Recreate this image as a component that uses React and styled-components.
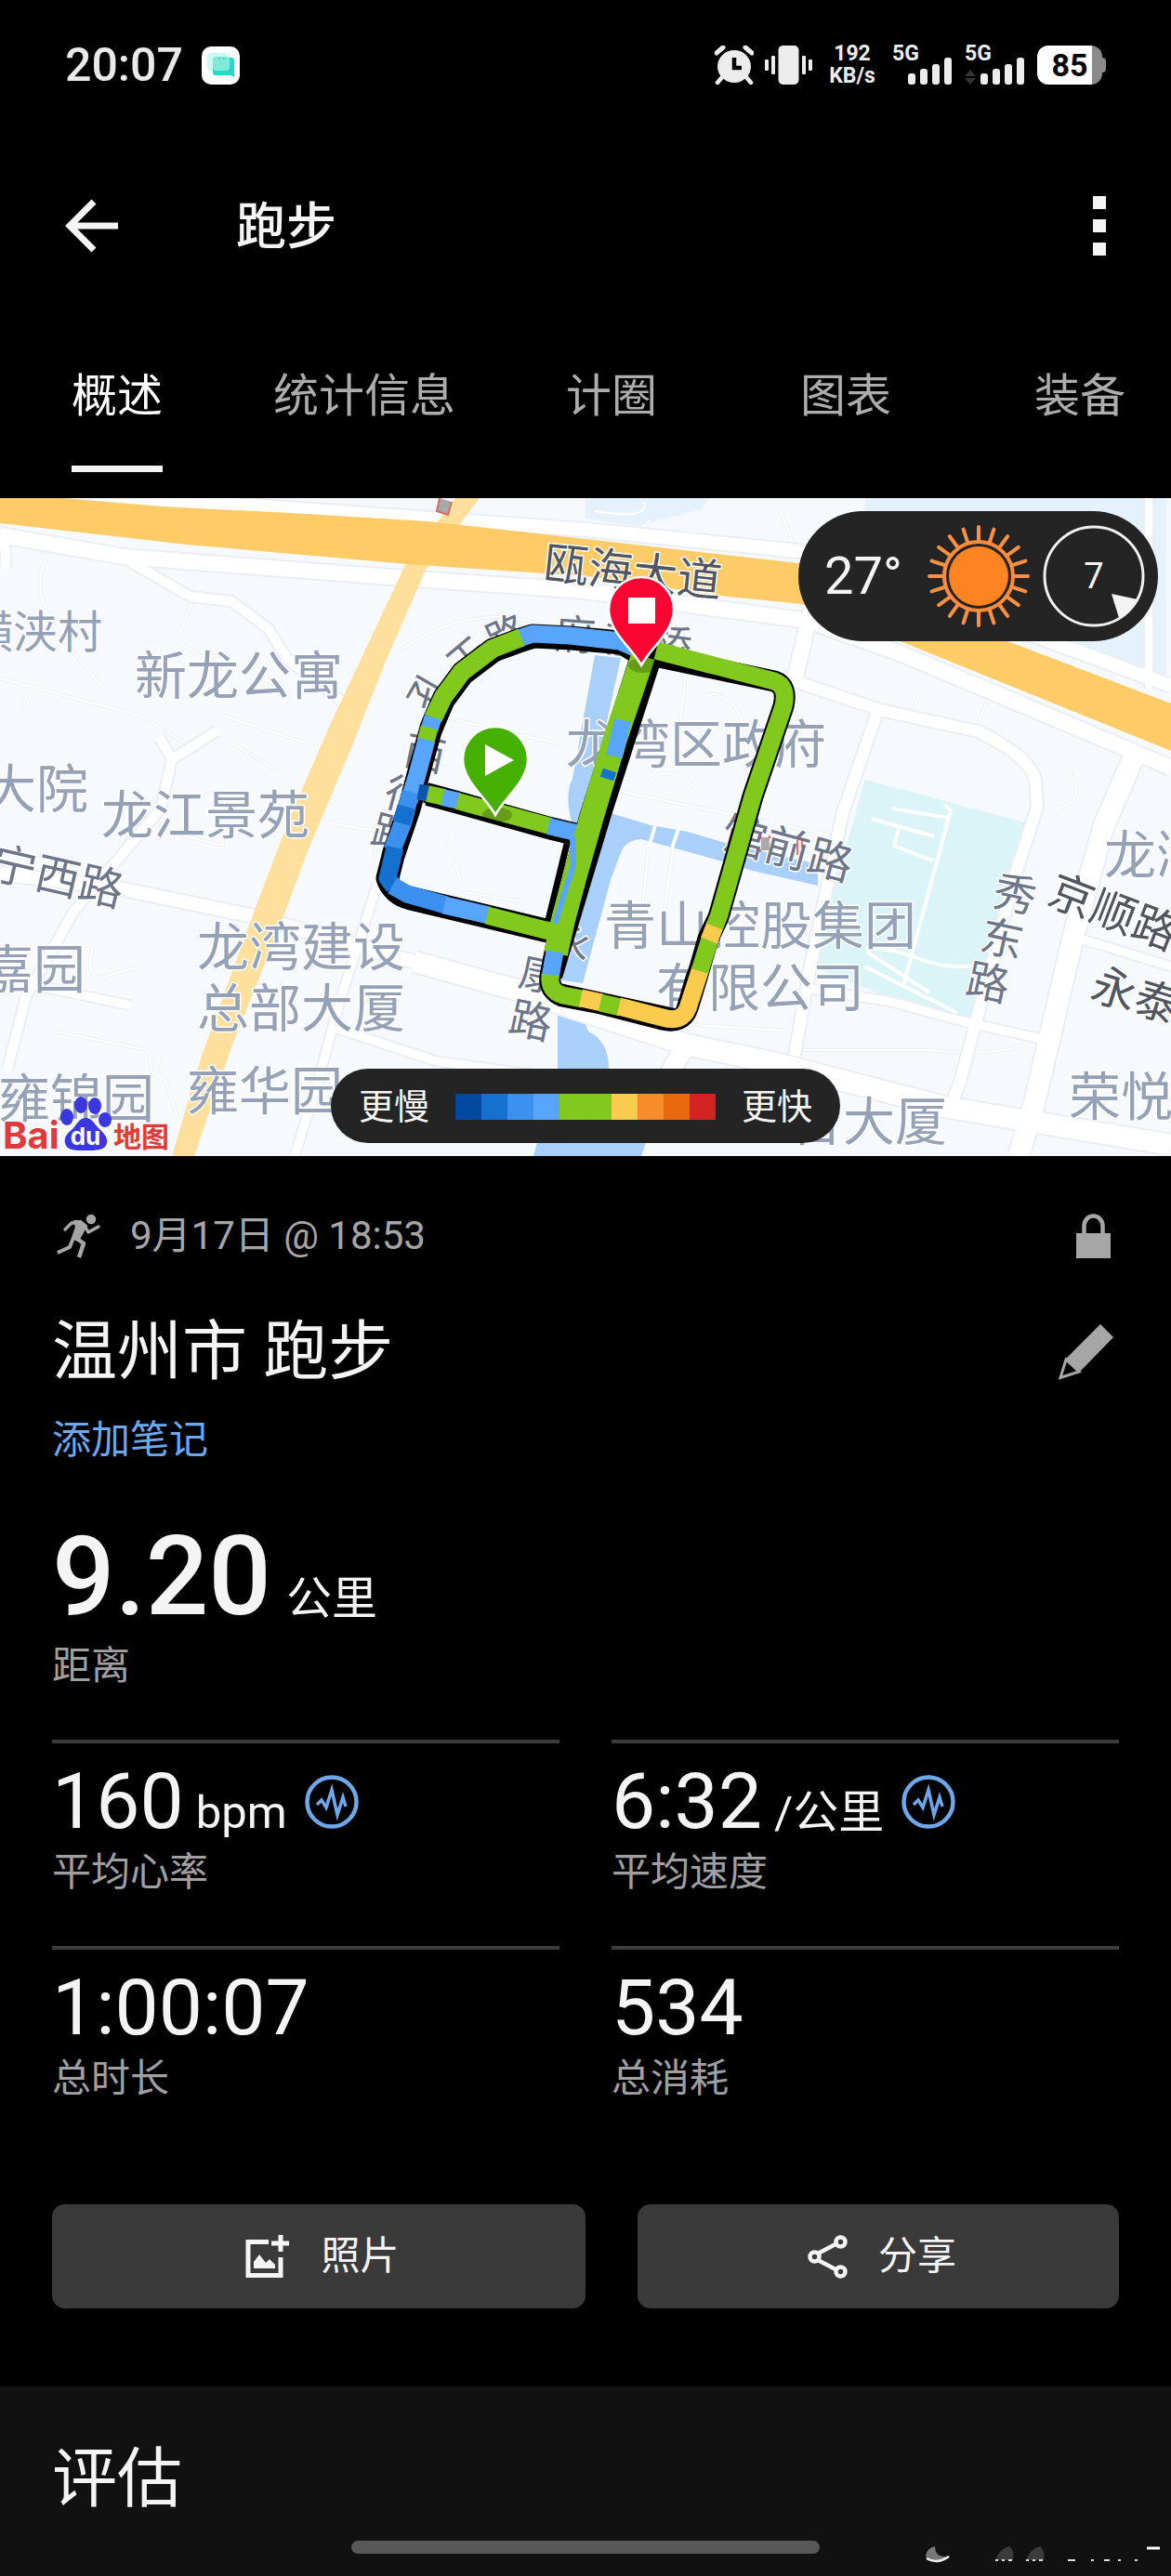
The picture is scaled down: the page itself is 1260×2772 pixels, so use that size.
import React, { useState } from "react";
import styled, { createGlobalStyle } from "styled-components";

const GlobalStyle = createGlobalStyle`
  * { box-sizing: border-box; }
  body {
    margin: 0;
    background: #000;
    color: #f4f4f4;
    font-family: Roboto, "Noto Sans CJK SC", sans-serif;
  }
  button { font: inherit; color: inherit; border: 0; background: none; padding: 0; cursor: pointer; }
  h1, h2, h3, p, dl, dd, dt { margin: 0; font-weight: 400; }
  svg { display: block; flex: none; }
`;

const Screen = styled.div`
  display: flex;
  flex-direction: column;
  min-height: 100vh;
  background: #000;
`;

/* ---------- status bar ---------- */

const StatusBar = styled.header`
  display: flex;
  align-items: center;
  justify-content: space-between;
  height: 140px;
  padding: 0 70px;
`;

const StatusGroup = styled.div`
  display: flex;
  align-items: center;
  gap: ${(p) => p.$gap}px;
`;

const Clock = styled.span`
  font-size: 50px;
  line-height: 52px;
  font-weight: 500;
  color: #e9e9e9;
`;

const NetSpeed = styled.span`
  width: 62px;
  font-size: 23px;
  line-height: 24px;
  font-weight: 700;
  text-align: center;
  color: #ececec;
`;

const SignalBox = styled.span`
  position: relative;
  width: 66px;
  height: 42px;
`;

const SignalLabel = styled.span`
  position: absolute;
  left: 0;
  top: -3px;
  font-size: 23px;
  line-height: 24px;
  font-weight: 700;
  color: #ececec;
`;

const Battery = styled.span`
  display: flex;
  align-items: center;
  width: 74px;
  &::after {
    content: "";
    width: 4px;
    height: 16px;
    border-radius: 0 4px 4px 0;
    background: #8a8a8a;
  }
`;

const BatteryBody = styled.span`
  flex: 1;
  height: 42px;
  border-radius: 12px;
  background: linear-gradient(90deg, #fff 84%, #8a8a8a 84%);
  color: #000;
  font-size: 34px;
  line-height: 43px;
  font-weight: 700;
  text-align: center;
`;

/* ---------- app bar and tabs ---------- */

const AppBar = styled.div`
  display: flex;
  align-items: center;
  height: 206px;
  padding: 0 70px;
`;

const IconButton = styled.button`
  display: flex;
  align-items: center;
`;

const AppTitle = styled.h1`
  flex: 1;
  padding: 4px 0 0 127px;
  font-size: 54px;
  line-height: 64px;
  font-weight: 500;
`;

const Dots = styled.span`
  display: grid;
  gap: 11px;
  i { width: 14px; height: 14px; background: #f4f4f4; }
`;

const Tabs = styled.nav`
  display: flex;
  overflow: hidden;
  padding-bottom: 28px;
`;

const Tab = styled.button`
  flex: none;
  min-width: 252px;
  height: 162px;
  padding: 0 42px;
  display: flex;
  justify-content: center;
  font-size: 49px;
  line-height: 162px;
  color: ${(p) => (p.$active ? "#fff" : "#adadad")};
  span { box-shadow: ${(p) => (p.$active ? "inset 0 -7px #f4f4f4" : "none")}; }
`;

/* ---------- map ---------- */

const MapArea = styled.section`
  position: relative;
  background: #f7f9fe;
`;

const MapCanvas = styled.svg`
  width: 100%;
  height: auto;
`;

const WeatherPill = styled.div`
  position: absolute;
  top: 14px;
  right: 14px;
  display: flex;
  align-items: center;
  gap: 14px;
  height: 140px;
  padding: 0 14px 0 28px;
  border-radius: 70px;
  background: #242424;
`;

const Temperature = styled.span`
  width: 97px;
  font-size: 56px;
  line-height: 64px;
`;

const Wind = styled.span`
  position: relative;
  display: flex;
  align-items: center;
  justify-content: center;
  width: 110px;
  height: 110px;
  font-size: 38px;
  svg { position: absolute; inset: 0; }
`;

const LegendPill = styled.div`
  position: absolute;
  bottom: 14px;
  left: 50%;
  transform: translateX(-50%);
  display: flex;
  align-items: center;
  gap: 28px;
  height: 80px;
  padding: 2px 30px 0;
  border-radius: 40px;
  background: #242424;
  font-size: 38px;
  line-height: 48px;
  white-space: nowrap;
`;

const Scale = styled.span`
  display: flex;
`;

const Swatch = styled.i`
  width: 28px;
  height: 28px;
  background: ${(p) => p.$color};
`;

/* ---------- summary ---------- */

const Summary = styled.main`
  padding: 62px 56px 84px;
`;

const MetaRow = styled.div`
  display: flex;
  align-items: center;
  height: 48px;
  font-size: 42px;
  line-height: 48px;
  color: #a6a6a6;
  padding-right: 9px;
`;

const DateText = styled.span`
  flex: 1;
  padding-left: 31px;
`;

const TitleRow = styled.div`
  display: flex;
  align-items: center;
  justify-content: space-between;
  margin-top: 59px;
  padding-right: 6px;
`;

const ActivityName = styled.h2`
  font-size: 70px;
  line-height: 84px;
`;

const NoteLink = styled.a`
  display: block;
  width: max-content;
  margin-top: 27px;
  font-size: 42px;
  line-height: 52px;
  color: #6ea8f0;
  text-decoration: none;
`;

const Distance = styled.dl`
  display: flex;
  flex-direction: column-reverse;
  gap: 10px;
  margin-top: 61px;
`;

const DistanceValue = styled.dd`
  display: flex;
  align-items: baseline;
  gap: 16px;
  height: 120px;
  font-size: 119px;
  line-height: 120px;
  font-weight: 500;
`;

const Unit = styled.span`
  font-size: 49px;
  line-height: 56px;
  font-weight: 400;
`;

const StatLabel = styled.dt`
  font-size: 42px;
  line-height: 52px;
  color: #a0a0a0;
`;

const StatGrid = styled.dl`
  display: grid;
  grid-template-columns: 1fr 1fr;
  gap: 53px 56px;
  margin-top: 53px;
`;

const Stat = styled.div`
  display: flex;
  flex-direction: column-reverse;
  justify-content: flex-end;
  gap: 8px;
  padding-top: 21px;
  border-top: 4px solid #3c3c3c;
`;

const StatValue = styled.dd`
  display: flex;
  align-items: center;
  gap: 19px;
  height: 84px;
`;

const Figure = styled.span`
  display: flex;
  align-items: baseline;
  gap: 13px;
  height: 84px;
  font-size: 84px;
  line-height: 84px;
`;

const Actions = styled.div`
  display: grid;
  grid-template-columns: 41fr 37fr;
  gap: 56px;
  margin-top: 109px;
`;

const ActionButton = styled.button`
  display: flex;
  align-items: center;
  justify-content: center;
  gap: 33px;
  height: 112px;
  padding-left: 8px;
  border-radius: 14px;
  background: #3a3a3a;
  font-size: 42px;
  line-height: 52px;
`;

const Evaluation = styled.section`
  position: relative;
  flex: 1;
  min-height: 204px;
  padding: 58px 56px 62px;
  background: #111;
`;

const HomeIndicator = styled.div`
  position: absolute;
  left: 30%;
  right: 30%;
  bottom: 24px;
  height: 14px;
  border-radius: 7px;
  background: #585858;
`;

const Corner = styled.div`
  position: absolute;
  right: 0;
  bottom: 0;
`;

/* ---------- icons ---------- */

const AlarmIcon = () => (
  <svg width="42" height="42" viewBox="0 0 42 42" fill="#ececec" stroke="#ececec" aria-hidden="true">
    <ellipse cx="21" cy="22.5" rx="18" ry="17.5" stroke="none" />
    <path d="M2 8 9 2M40 8 33 2" strokeWidth="5" strokeLinecap="round" />
    <path d="M8 34 3 40M34 34 39 40" strokeWidth="4.5" strokeLinecap="round" />
    <path d="M21 13v11h8" fill="none" stroke="#000" strokeWidth="4.5" />
  </svg>
);

const VibrateIcon = () => (
  <svg width="51" height="42" viewBox="0 0 51 42" fill="#ececec" aria-hidden="true">
    <rect x="14.500" y="0" width="22" height="42" rx="5" />
    <rect x="7" y="11" width="4" height="20" rx="1" />
    <rect x="0" y="15" width="4" height="12" rx="1" />
    <rect x="40" y="11" width="4" height="20" rx="1" />
    <rect x="47" y="15" width="4" height="12" rx="1" />
  </svg>
);

const ChatAppIcon = () => (
  <svg width="41" height="41" viewBox="0 0 41 41" aria-hidden="true">
    <rect width="41" height="41" rx="10" fill="#fff" />
    <rect x="6" y="7" width="24" height="20" rx="5" fill="#c9faf1" />
    <path d="M14 12h18q3 0 3 3v18l-4-2H15q-3 0-3-3V14q0-2 2-2z" fill="#22dcc8" />
    <rect x="12" y="11" width="18" height="15" rx="4" fill="#7fead8" />
    <path d="M19 12v2M24 12v2" stroke="#3aa" strokeWidth="1" />
  </svg>
);

function Signal({ arrows }) {
  return (
    <SignalBox>
      <SignalLabel>5G</SignalLabel>
      <svg width="66" height="42" viewBox="0 0 66 42" aria-hidden="true">
        {arrows && <path d="M0 33 6 26l6 7zM0 35l6 7 6-7z" fill="#333" />}
        {[12, 17, 22, 29].map((h, i) => (
          <rect key={h} x={17 + i * 13} y={42 - h} width="8" height={h} rx="3" fill="#ececec" />
        ))}
      </svg>
    </SignalBox>
  );
}

const BackIcon = () => (
  <svg width="57" height="58" viewBox="0 0 57 58" fill="none" stroke="#f4f4f4" strokeWidth="7" aria-hidden="true">
    <path d="M31 3 5 29l26 26M5 29h52" />
  </svg>
);

const RunIcon = () => (
  <svg width="53" height="48" viewBox="0 0 53 48" fill="none" stroke="#a6a6a6" strokeLinejoin="round" aria-hidden="true">
    <circle cx="42" cy="6" r="5.200" fill="#a6a6a6" stroke="none" />
    <path d="M24 8h7l6 5-5 9-4 7-6-3 4-12z" fill="#a6a6a6" strokeWidth="2" />
    <path d="M29 10l-8 0-7 7M35 13l4 7 11-6" strokeWidth="3.400" strokeLinecap="round" />
    <path d="M24 25l10 7-5 15" strokeWidth="4.500" />
    <path d="M23 26l-4 10-13 6" strokeWidth="4" />
  </svg>
);

const LockIcon = () => (
  <svg width="37" height="48" viewBox="0 0 37 48" aria-hidden="true">
    <path d="M8.500 23V13a10 10.500 0 0 1 20 0v10" fill="none" stroke="#a6a6a6" strokeWidth="4.500" />
    <rect y="21" width="37" height="27" fill="#a6a6a6" />
  </svg>
);

const PencilIcon = () => (
  <svg width="59" height="60" viewBox="0 0 59 60" aria-hidden="true">
    <path d="M45 0 59 14 22 52 7 38z" fill="#a6a6a6" />
    <path d="M8 38 2 57.500 22 51z" fill="#000" stroke="#a6a6a6" strokeWidth="3" />
  </svg>
);

const PulseIcon = () => (
  <svg width="58" height="58" viewBox="0 0 58 58" fill="none" stroke="#6ea8ea" aria-hidden="true">
    <circle cx="29" cy="29" r="26.500" strokeWidth="4.500" />
    <path d="M13 32l5-5 5 8 6-19 6 27 6-19 3 10" strokeWidth="3.500" />
  </svg>
);

const PhotoIcon = () => (
  <svg width="48" height="48" viewBox="0 0 48 48" aria-hidden="true">
    <path d="M25 8.500H3v36h35V25" fill="none" stroke="#f4f4f4" strokeWidth="5" />
    <path d="M38 1v18M28 10h19" stroke="#f4f4f4" strokeWidth="5" />
    <path d="M9 37V30l6-8 7 9 4-4 6 6v4z" fill="#f4f4f4" />
  </svg>
);

const ShareIcon = () => (
  <svg width="43" height="47" viewBox="0 0 43 47" fill="none" stroke="#f4f4f4" strokeWidth="4.500" aria-hidden="true">
    <path d="M11 20 30 10M11 27 30 37" />
    <circle cx="7.500" cy="23.500" r="5" />
    <circle cx="35.500" cy="7.500" r="5" />
    <circle cx="35.500" cy="39.500" r="5" />
  </svg>
);

const SunIcon = () => (
  <svg width="110" height="110" viewBox="-55 -55 110 110" aria-hidden="true">
    <circle r="32" fill="#fd8420" />
    <circle r="37" fill="none" stroke="#fd8c3a" strokeWidth="4" />
    {Array.from({ length: 20 }, (_, i) => (
      <path key={i} d="M0-38V-53" stroke="#fb8f42" strokeWidth="4" strokeLinecap="round" transform={`rotate(${i * 18})`} />
    ))}
  </svg>
);

/* ---------- map drawing ---------- */

const ROADS = [
  [14, "M100 532 630 570 870 594"],
  [16, "M0 576 133 599 434 622 630 636 870 668 971 704 1260 826"],
  [14, "M1080 672 1260 738"],
  [10, "M137 603 205 642 249 647 289 677 309 709 368 755"],
  [10, "M171 793 185 817 233 787"],
  [10, "M185 817 173 870 80 980 28 1072 8 1150"],
  [10, "M0 575Q8 590 6 610"],
  [14, "M0 940 133 957 269 985 446 1035 562 1067"],
  [22, "M446 1035 562 1067 738 1124 831 1143 1016 1191 1260 1232"],
  [9, "M36 1060 141 1082"],
  [9, "M406 952 366 1076 341 1168 317 1244"],
  [9, "M354 1104 470 1142 600 1160"],
  [20, "M738 1124 718 1160"],
  [16, "M873 655 855 732"],
  [12, "M840 728 947 764 1052 787Q1110 815 1114 840L1116 868 1092 943 1032 1168 1020 1195"],
  [12, "M943 769 907 874 871 1044 855 1136"],
  [22, "M1224 805 1188 888 1156 1003 1112 1191 1096 1244"],
  [9, "M867 1063 959 1078 1036 1099 1130 1120"],
  [9, "M1152 1007 1260 1040"],
  [8, "M1236 536V740"],
];

const LANES =
  "M0 730 150 770 200 800M30 745 20 770M50 600Q30 640 70 690T110 740M210 640 190 690 240 720M160 860Q150 880 180 895L240 910 236 880M240 770 330 800M360 860Q340 870 350 885L410 895 420 850M250 800 300 830M100 1020Q90 1050 110 1052L150 1040M60 1110 160 1130 165 1160M410 880 400 940M480 900 500 960 560 970M640 690Q650 600 700 560M700 700 690 760M740 710 730 790M700 840Q720 820 750 850M660 850 900 900M700 890 690 990M727 895 712 1000M760 750Q770 740 790 760T800 880M430 700Q520 640 600 680M470 770 600 800M980 770 990 745M1052 780 1062 755M1140 870Q1170 860 1150 830M860 1130 1000 1130Q1100 1140 1120 1110M700 1100 860 1110M170 1140 190 1200M640 550Q700 560 693 540M840 550 853 585";

const PARK_LANES =
  "M960 870 1020 880M938 881 1005 900M1016 866 1023 872 972 1060M967 892 962 910 1004 926M932 1020Q960 1020 990 1032T1060 1038M930 1040 1030 1090M932 1024 1000 1068";

const CYAN = "#57a5fd";
const BLUE = "#3b90f0";
const DEEP = "#1571cf";
const NAVY = "#0c55ae";
const GREEN = "#82c91e";
const GOLD = "#fbcb4e";

const OUTLINE = [
  [23, "M690 704 667 690 613 685 573 683 560 687 530 698 497 723 477 750 467 773 463 783 448 837 440 867 423 917 416 945Q420 960 440 965L587 1000 610 1005"],
  [22, "M458 853 477 858 592 890 625 898"],
  [24, "M632 895 608 1000"],
  [23, "M690 703 833 733Q848 738 843 760L810 857 773 987 762 1010 750 1052 740 1085Q734 1102 713 1097L647 1080 605 1072Q590 1066 592 1050L600 1010"],
  [28, "M692 707 637 880 600 1015"],
];

const SEGMENTS = [
  [19, CYAN, "M690 700 667 690 613 684 573 682 558 687"],
  [20, GREEN, "M561 686 530 698 497 723 477 750 466 773"],
  [19, CYAN, "M466 772 462 785"],
  [19, GREEN, "M462 783 458 798"],
  [19, CYAN, "M459 796 448 837 440 862"],
  [19, BLUE, "M442 852 434 884 422 915"],
  [19, DEEP, "M437 868 432 886"],
  [19, DEEP, "M425 912 417 945 424 954"],
  [19, BLUE, "M422 953 438 962 480 974"],
  [19, CYAN, "M478 974 526 985"],
  [19, GREEN, "M524 985 587 1001 606 1004"],
  [17, NAVY, "M450 852 461 854"],
  [18, GREEN, "M460 854 478 858"],
  [18, CYAN, "M476 858 494 862"],
  [18, GREEN, "M492 862 592 889"],
  [18, CYAN, "M590 889 628 898"],
  [26, GREEN, "M692 706 662 795 637 878 618 945 606 990 598 1026"],
  [6, CYAN, "M616 900 617 930 597 994"],
  [18, CYAN, "M670 775 661 814"],
  [15, DEEP, "M656 829 653 838"],
  [19, CYAN, "M597 1024 592 1052"],
  [19, GREEN, "M592 1049Q590 1067 606 1071L627 1075"],
  [19, GOLD, "M625 1074 648 1079"],
  [19, GREEN, "M646 1079 668 1084"],
  [19, GOLD, "M666 1083 713 1095Q734 1101 740 1085L754 1042"],
  [19, GREEN, "M753 1045 764 1010"],
  [19, GOLD, "M763 1012 770 994"],
  [19, GREEN, "M769 997 774 984 810 857 843 760Q848 738 833 733L706 700"],
];

const PLACE = "#94a1b7";
const STREET = "#6c7589";
const DARK = "#50555f";

const LABELS = [
  ["横浃村", 38, 680, 48, 0, PLACE],
  ["新龙公寓", 257, 728, 56, 0, PLACE],
  ["大院", 39, 850, 56, 0, PLACE],
  ["龙江景苑", 221, 878, 56, 0, PLACE],
  ["宁西路", 62, 944, 48, 13, STREET],
  ["嘉园", 36, 1044, 56, 0, PLACE],
  ["龙湾建设", 324, 1020, 56, 0, PLACE],
  ["总部大厦", 324, 1086, 56, 0, PLACE],
  ["雍锦园", 82, 1183, 56, 0, PLACE],
  ["雍华园", 285, 1175, 56, 0, PLACE],
  ["瓯海大道", 681, 616, 48, 6, DARK],
  ["龙湾区政府", 749, 802, 56, 0, PLACE],
  ["馆前路", 847, 914, 48, 15, STREET],
  ["青山控股集团", 818, 997, 56, 0, PLACE],
  ["有限公司", 818, 1064, 56, 0, PLACE],
  ["秀", 1092, 963, 46, 12, STREET],
  ["东", 1078, 1011, 46, 12, STREET],
  ["路", 1063, 1058, 46, 12, STREET],
  ["京顺路", 1198, 982, 48, 21, DARK],
  ["永泰", 1222, 1072, 48, 17, DARK],
  ["龙湾", 1244, 921, 56, 0, PLACE],
  ["荣悦", 1206, 1181, 56, 0, PLACE],
  ["台大厦", 935, 1208, 56, 0, PLACE],
  ["孔", 463, 743, 44, -60, STREET],
  ["于", 504, 709, 44, -40, STREET],
  ["路", 546, 684, 44, -25, STREET],
  ["西", 457, 812, 44, 12, STREET],
  ["行", 436, 857, 44, 15, STREET],
  ["路", 422, 898, 44, 15, STREET],
  ["府", 619, 684, 44, 4, STREET],
  ["前", 672, 688, 44, 6, STREET],
  ["桥", 722, 694, 44, 8, STREET],
  ["永", 613, 1014, 44, 12, STREET],
  ["康", 581, 1050, 44, 12, STREET],
  ["路", 571, 1099, 46, 12, STREET],
];

function Pin({ x, y, color, children }) {
  return (
    <g transform={`translate(${x} ${y})`}>
      <ellipse cx="2" cy="0" rx="16" ry="8" fill="#000" opacity="0.22" />
      <path d="M0 0C-9-18-35-36-35-60a35 35 0 0 1 70 0C35-36 9-18 0 0z" fill={color} stroke="#fff" strokeWidth="2.500" />
      {children}
    </g>
  );
}

function RouteMap() {
  return (
    <MapCanvas viewBox="0 536 1260 708" role="img" aria-label="跑步路线地图" fill="none">
      <rect y="536" width="1260" height="708" fill="#f6f9fe" />
      <path d="M630 536h133l-8 12-70 18-55-8zM931 536h324v190l-150-40-180-90z" fill="#e5f2fc" />
      <path d="M931 839 1106 886 1092 943 1044 1097 959 1074 871 1040 905 930z" fill="#daf4f7" />
      <path d={LANES} stroke="#edf0f6" strokeWidth="4" />
      <path d={LANES} stroke="#fff" strokeWidth="2" />
      <path
        d="M640 705 668 708 628 890 657 875 700 888 740 895 780 907 880 930V953L810 937 777 927 727 913 690 903Q672 904 667 920L657 947 627 1058 592 1053 620 900Q605 860 616 838zM600 1087 627 1095 633 1110Q655 1120 655 1150L700 1215 690 1244H574L600 1150z"
        fill="#a9cffb"
      />
      <path d="M706 885 698 912M731 889 722 916" stroke="#fff" strokeWidth="4" />
      <g strokeLinejoin="round">
        {ROADS.map(([w, d]) => <path key={d} d={d} stroke="#ebeef5" strokeWidth={w + 4} />)}
        {ROADS.map(([w, d]) => <path key={d} d={d} stroke="#fff" strokeWidth={w} />)}
      </g>
      <path d={PARK_LANES} stroke="#fff" strokeWidth="4" />
      <path d="M516 536 458 613 414 714 378 805 333 911 297 1007 249 1127 209 1244H185L217 1136 277 971 313 877 356 778 436 608 490 536z" fill="#fee09c" />
      <path d="M0 536H68L173 545 313 552 460 561 630 580 859 606 1084 690 1260 757V808L971 691 863 650 783 642 630 620 438 607 201 586 0 563z" fill="#fecb66" />
      <path d="M473 536 470 550 482 554 486 540" fill="#a9a9a9" stroke="#e06a5c" strokeWidth="2" />

      <g textAnchor="middle" stroke="#fff" strokeWidth="3" strokeLinejoin="round" paintOrder="stroke">
        {LABELS.map(([text, x, y, size, angle, color]) => (
          <text key={text + x} fontSize={size} fill={color} dominantBaseline="central" transform={`translate(${x} ${y}) rotate(${angle})`}>
            {text}
          </text>
        ))}
      </g>
      <path d="M819 901h9v14h-9z" fill="#aaa" />
      <path d="M818 899v4M828 899v3M818 914v3M858 904v16M863 902v10" stroke="#e2453c" strokeWidth="1.500" />

      <g stroke="#000" strokeLinejoin="round">
        {OUTLINE.map(([w, d]) => <path key={d} d={d} strokeWidth={w} />)}
        <g transform="translate(2 4)">
          {OUTLINE.slice(0, 2).map(([w, d]) => <path key={d} d={d} strokeWidth={w - 2} />)}
        </g>
        <path d="M708 712 654 880 618 1000 602 1052M706 710 832 741" strokeWidth="6" />
        <path d="M610 908 590 990" strokeWidth="7" />
        <path d="M597 1061 730 1090 742 1050 758 1010" strokeWidth="8" />
      </g>
      <g strokeLinejoin="round">
        {SEGMENTS.map(([w, color, d]) => <path key={d + color} d={d} stroke={color} strokeWidth={w} />)}
      </g>

      <Pin x={533} y={877} color="#45b000">
        <path d="M-11-76v34l31-17z" fill="#fff" />
      </Pin>
      <Pin x={690} y={716} color="#fb0532">
        <rect x="-14" y="-73" width="29" height="28" fill="#fff" />
      </Pin>

      <g>
        <g fill="#3b37e0">
          <ellipse cx="72" cy="1202" rx="7" ry="9" />
          <ellipse cx="87" cy="1189" rx="7" ry="9" />
          <ellipse cx="102" cy="1190" rx="7" ry="9" />
          <ellipse cx="113" cy="1205" rx="7" ry="8" />
          <path d="M92 1203c-7 0-9 7-14 12-7 6-9 9-8 15 2 8 10 8 22 8s21 0 23-8c1-7-3-10-9-16-5-5-7-11-14-11z" />
        </g>
        <g fontWeight="700" fontFamily="Inter, 'Noto Sans CJK SC', sans-serif">
          <text x="3" y="1236" fontSize="40" fill="#df3a3c">Bai</text>
          <text x="92" y="1232" fontSize="26" fill="#fff" textAnchor="middle">du</text>
          <text x="122" y="1234" fontSize="30" fill="#df3a3c">地图</text>
        </g>
      </g>
    </MapCanvas>
  );
}

/* ---------- data ---------- */

const TABS = ["概述", "统计信息", "计圈", "图表", "装备"];

const SCALE = ["#0048a0", "#1571cf", "#3b90f0", "#57a5fd", "#82c91e", "#82c91e", "#fbcb4e", "#f98c2a", "#ea690c", "#d32222"];

const STATS = [
  { value: "160", unit: "bpm", label: "平均心率", pulse: true },
  { value: "6:32", unit: "/公里", label: "平均速度", pulse: true },
  { value: "1:00:07", label: "总时长" },
  { value: "534", label: "总消耗" },
];

export default function App() {
  const [tab, setTab] = useState(TABS[0]);
  return (
    <Screen>
      <GlobalStyle />
      <StatusBar>
        <StatusGroup $gap={20}>
          <Clock>20:07</Clock>
          <ChatAppIcon />
        </StatusGroup>
        <StatusGroup $gap={12}>
          <AlarmIcon />
          <VibrateIcon />
          <NetSpeed>192 KB/s</NetSpeed>
          <Signal />
          <Signal arrows />
          <Battery>
            <BatteryBody>85</BatteryBody>
          </Battery>
        </StatusGroup>
      </StatusBar>

      <AppBar>
        <IconButton aria-label="返回"><BackIcon /></IconButton>
        <AppTitle>跑步</AppTitle>
        <IconButton aria-label="更多"><Dots><i /><i /><i /></Dots></IconButton>
      </AppBar>

      <Tabs>
        {TABS.map((name) => (
          <Tab key={name} $active={name === tab} onClick={() => setTab(name)}>
            <span>{name}</span>
          </Tab>
        ))}
      </Tabs>

      <MapArea>
        <RouteMap />
        <WeatherPill>
          <Temperature>27°</Temperature>
          <SunIcon />
          <Wind>
            <svg width="110" height="110" viewBox="0 0 110 110" aria-hidden="true">
              <circle cx="55" cy="55" r="53" fill="none" stroke="#efefef" strokeWidth="3" />
              <path d="M74 74 102 80Q94 94 82 100z" fill="#f4f4f4" />
            </svg>
            7
          </Wind>
        </WeatherPill>
        <LegendPill>
          <span>更慢</span>
          <Scale>{SCALE.map((c, i) => <Swatch key={i} $color={c} />)}</Scale>
          <span>更快</span>
        </LegendPill>
      </MapArea>

      <Summary>
        <MetaRow>
          <RunIcon />
          <DateText>9月17日 @ 18:53</DateText>
          <LockIcon />
        </MetaRow>
        <TitleRow>
          <ActivityName>温州市 跑步</ActivityName>
          <IconButton aria-label="编辑"><PencilIcon /></IconButton>
        </TitleRow>
        <NoteLink href="#notes">添加笔记</NoteLink>

        <Distance>
          <StatLabel>距离</StatLabel>
          <DistanceValue>9.20<Unit>公里</Unit></DistanceValue>
        </Distance>

        <StatGrid>
          {STATS.map((s) => (
            <Stat key={s.label}>
              <StatLabel>{s.label}</StatLabel>
              <StatValue>
                <Figure>{s.value}{s.unit && <Unit>{s.unit}</Unit>}</Figure>
                {s.pulse && <PulseIcon />}
              </StatValue>
            </Stat>
          ))}
        </StatGrid>

        <Actions>
          <ActionButton><PhotoIcon />照片</ActionButton>
          <ActionButton><ShareIcon />分享</ActionButton>
        </Actions>
      </Summary>

      <Evaluation>
        <ActivityName>评估</ActivityName>
        <HomeIndicator />
        <Corner>
          <svg width="280" height="44" viewBox="0 0 280 44" aria-hidden="true">
            <path d="M16 23Q17 14 26 12 26 26 42 22 38 29 28 29 20 29 16 23z" fill="#777" />
            <path d="M17 25Q28 32 41 23" fill="none" stroke="#eee" strokeWidth="2.500" />
            <path d="M91 27Q96 14 106 12 112 16 110 27zM124 27Q129 14 139 12 145 16 143 27z" fill="#3c3c3c" />
            <path d="M91 27h3M98 27h3M105 27h4M124 27h3M131 27h3M138 27h4M169 27h8M194 27h3M208 27h6M223 27h3M241 27h3" stroke="#ddd" strokeWidth="2" />
            <path d="M254 14h14" stroke="#fff" strokeWidth="3" />
          </svg>
        </Corner>
      </Evaluation>
    </Screen>
  );
}
